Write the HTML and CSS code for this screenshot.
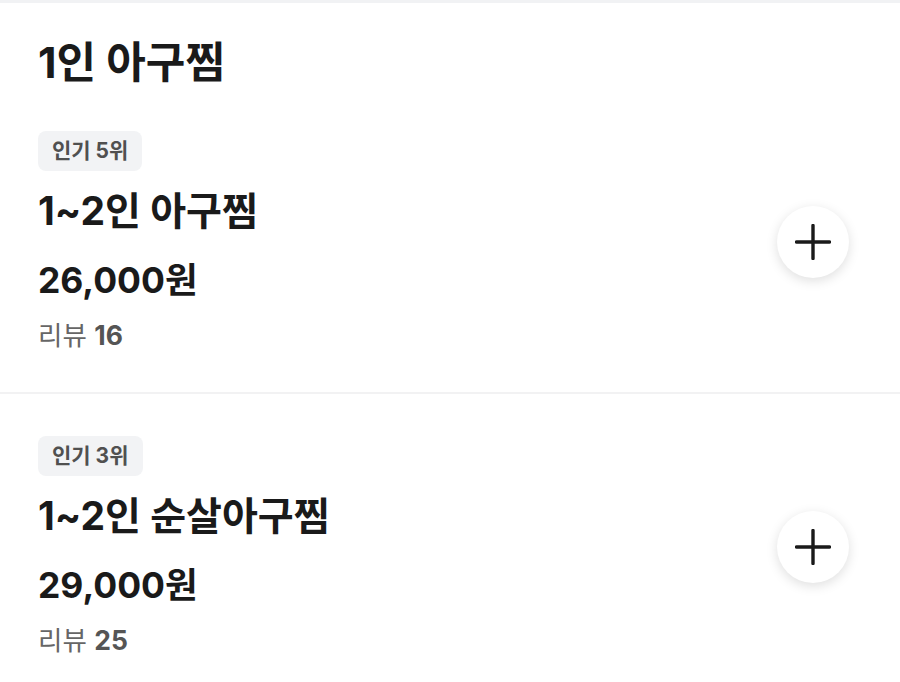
FILE: index.html
```html
<!DOCTYPE html>
<html lang="ko">
<head>
<meta charset="utf-8">
<link rel="stylesheet" href="styles.css">
</head>
<body>
<div class="top-bar"></div>
<section class="menu-group">
  <h1 class="group-title">1인 아구찜</h1>
  <div class="item item-first">
    <div class="info">
      <span class="badge">인기 5위</span>
      <div class="name">1~2인 아구찜</div>
      <div class="price">26,000원</div>
      <div class="review">리뷰 <b>16</b></div>
    </div>
    <button class="add" aria-label="추가">
      <svg viewBox="0 0 36 36" width="36" height="36"><path d="M18 1.5V34.5M1.5 18H34.5" stroke="#1a1a1a" stroke-width="3.4" stroke-linecap="round" fill="none"/></svg>
    </button>
  </div>
  <div class="divider"></div>
  <div class="item item-next">
    <div class="info">
      <span class="badge">인기 3위</span>
      <div class="name">1~2인 순살아구찜</div>
      <div class="price">29,000원</div>
      <div class="review">리뷰 <b>25</b></div>
    </div>
    <button class="add" aria-label="추가">
      <svg viewBox="0 0 36 36" width="36" height="36"><path d="M18 1.5V34.5M1.5 18H34.5" stroke="#1a1a1a" stroke-width="3.4" stroke-linecap="round" fill="none"/></svg>
    </button>
  </div>
</section>
</body>
</html>
```
FILE: styles.css
```css
html, body {
  margin: 0;
  padding: 0;
  background: #ffffff;
}
body {
  font-family: "Inter", "Noto Sans CJK KR", "Noto Sans", sans-serif;
  color: #1a1a1a;
  width: 900px;
  overflow: hidden;
}
.top-bar {
  height: 3px;
  background: #f1f2f4;
}
.group-title {
  margin: 0;
  padding: 34px 38px 0;
  font-size: 43px;
  line-height: 50px;
  height: 50px;
  font-weight: 700;
}
.item {
  display: flex;
  align-items: center;
  justify-content: space-between;
  padding: 0 51px 0 38px;
}
.item-first {
  padding-top: 44px;
  padding-bottom: 40px;
}
.item-next {
  padding-top: 42px;
  padding-bottom: 40px;
}
.info {
  display: flex;
  flex-direction: column;
  align-items: flex-start;
}
.badge {
  display: block;
  background: #f2f3f5;
  color: #505050;
  font-size: 21px;
  line-height: 40px;
  height: 40px;
  padding: 0 14px;
  border-radius: 8px;
  font-weight: 700;
}
.name {
  margin-top: 16px;
  font-size: 39px;
  line-height: 48px;
  height: 48px;
  font-weight: 700;
}
.price {
  margin-top: 23px;
  font-size: 35.5px;
  line-height: 46px;
  height: 46px;
  font-weight: 700;
}
.review {
  margin-top: 14px;
  font-size: 26.5px;
  line-height: 34px;
  height: 34px;
  color: #666666;
}
.review b {
  color: #555555;
  font-weight: 700;
}
.add {
  width: 72px;
  height: 72px;
  border-radius: 50%;
  border: none;
  background: #ffffff;
  box-shadow: 0 3px 12px rgba(0, 0, 0, 0.13);
  display: flex;
  align-items: center;
  justify-content: center;
  padding: 0;
  flex: none;
}
.divider {
  height: 2px;
  background: #f2f2f3;
}
```
